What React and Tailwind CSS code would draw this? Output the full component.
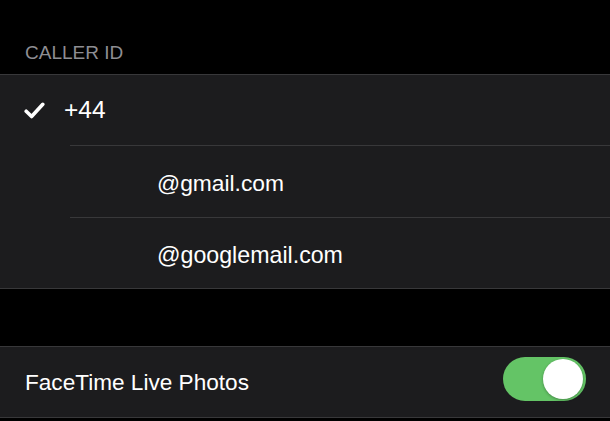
export default function App() {
  const font = { fontFamily: '"Liberation Sans", Arial, sans-serif' };
  return (
    <div className="w-[610px] h-[421px] bg-black overflow-hidden flex flex-col" style={font}>
      <div className="h-[74px] shrink-0 pt-[42px] pl-[25px]">
        <div className="text-[19px] leading-[22px] text-[#8e8e93]">CALLER ID</div>
      </div>
      <div className="shrink-0 bg-[#1c1c1e] border-y border-[#38383a]">
        <div className="h-[70px] flex items-center">
          <svg className="ml-[24px] w-[21px] h-[17px]" viewBox="0 0 21 17" fill="none">
            <path d="M2.2 9.2 L7.6 14.5 L18.8 2.3" stroke="#ffffff" strokeWidth="3.6" strokeLinecap="round" strokeLinejoin="round" />
          </svg>
          <span className="ml-[19px] text-[24.5px] leading-[28px] text-white">+44</span>
        </div>
        <div className="ml-[70px] h-px bg-[#38383a]" />
        <div className="h-[71px] flex items-center pl-[157px] pt-[3px]">
          <span className="text-[22.8px] leading-[28px] text-white">@gmail.com</span>
        </div>
        <div className="ml-[70px] h-px bg-[#38383a]" />
        <div className="h-[70px] flex items-center pl-[157px] pt-[4px]">
          <span className="text-[23.2px] leading-[28px] text-white">@googlemail.com</span>
        </div>
      </div>
      <div className="h-[57px] shrink-0" />
      <div className="shrink-0 bg-[#1c1c1e] border-y border-[#38383a]">
        <div className="h-[70px] flex items-start pl-[25px] pr-[24px]">
          <span className="mt-[22px] text-[22.6px] leading-[28px] text-white">FaceTime Live Photos</span>
          <div className="ml-auto mt-[10px] w-[83px] h-[44px] rounded-full bg-[#64c466] flex items-center justify-end pr-[3px]">
            <div className="w-[40px] h-[40px] rounded-full bg-white shadow-[0_1px_3px_rgba(0,0,0,0.3)]" />
          </div>
        </div>
      </div>
    </div>
  );
}
